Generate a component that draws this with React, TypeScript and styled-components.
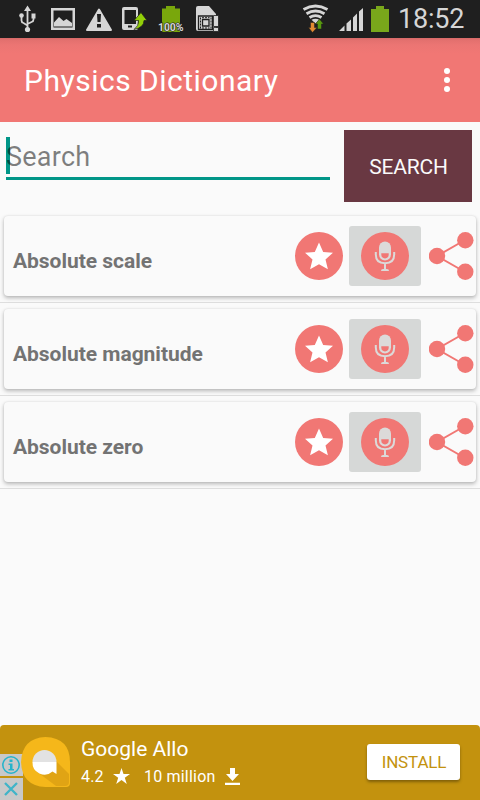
import React from "react";
import styled, { createGlobalStyle } from "styled-components";

const coral = "#f17774";

const GlobalStyle = createGlobalStyle`
  * { box-sizing: border-box; }
  body { margin: 0; background: #fafafa; font-family: Roboto, sans-serif; }
  svg { display: block; flex: none; }
`;

const Screen = styled.div`
  width: 480px;
  height: 800px;
  display: flex;
  flex-direction: column;
  overflow: hidden;
  background: #fafafa;
`;

const StatusBar = styled.header`
  height: 38px;
  flex: none;
  display: flex;
  justify-content: space-between;
  background: #1f1f1f;
`;

const Clock = styled.span`
  margin-left: 8px;
  width: 82px;
  font-size: 27px;
  line-height: 38px;
  letter-spacing: -0.2px;
  color: #d6d6d6;
`;

const StatusRight = styled.div`
  display: flex;
`;

const Toolbar = styled.div`
  height: 84px;
  flex: none;
  display: flex;
  align-items: center;
  justify-content: space-between;
  padding: 0 29px 0 24px;
  background: linear-gradient(#d56a68 0, #e3706e 2px, #ec7573 7px, ${coral} 16px);
`;

const Title = styled.h1`
  margin: 1px 0 0;
  font-size: 30px;
  line-height: 36px;
  font-weight: 400;
  letter-spacing: 0.5px;
  color: #fff;
`;

const MenuDots = styled.button`
  width: 8px;
  padding: 0;
  border: 0;
  background: none;
  display: flex;
  flex-direction: column;
  align-items: center;
  gap: 3px;
`;

const Dot = styled.i`
  width: 6px;
  height: 6px;
  border-radius: 50%;
  background: #fff;
`;

const SearchRow = styled.div`
  height: 88px;
  flex: none;
  display: flex;
  justify-content: space-between;
  padding: 8px 8px 8px 6px;
`;

const Field = styled.div`
  width: 324px;
  height: 50px;
  display: flex;
  align-items: flex-start;
  padding-top: 7px;
  border-bottom: 3px solid #009688;
`;

const Caret = styled.i`
  width: 4px;
  height: 37px;
  background: #009688;
`;

const Placeholder = styled.span`
  margin-left: -4px;
  font-size: 27px;
  line-height: 40px;
  letter-spacing: 0.25px;
  color: rgba(0, 0, 0, 0.5);
`;

const SearchButton = styled.button`
  width: 128px;
  height: 72px;
  padding: 2px 0 0 1px;
  border: 0;
  background: #693842;
  color: #fafafa;
  font: 400 21px/24px Roboto, sans-serif;
  letter-spacing: -0.2px;
`;

const List = styled.main`
  flex: 1;
`;

const Row = styled.div`
  height: 93px;
  padding: 6px 4px;
  border-bottom: 1px solid #dedede;
`;

const Card = styled.article`
  height: 80px;
  display: flex;
  align-items: center;
  padding: 0 2px 0 9px;
  border-radius: 4px;
  background: #fafafa;
  box-shadow: 0 2px 4px rgba(0, 0, 0, 0.27), 0 0 2px rgba(0, 0, 0, 0.1);
`;

const Term = styled.span`
  flex: 1;
  margin-top: 10px;
  font-size: 21px;
  line-height: 26px;
  font-weight: 700;
  letter-spacing: -0.03px;
  color: #737373;
`;

const MicBox = styled.div`
  width: 72px;
  height: 60px;
  margin: 0 8px 0 6px;
  display: flex;
  align-items: center;
  justify-content: center;
  border-radius: 3px;
  background: #d6d8d7;
`;

const Banner = styled.footer`
  height: 75px;
  flex: none;
  display: flex;
  border-radius: 4px 4px 0 0;
  background: #c3920e;
  color: #fff;
`;

const AdChoices = styled.div`
  width: 23px;
  padding-top: 29px;
  display: flex;
  flex-direction: column;
  gap: 2px;
`;

const AdButton = styled.div`
  width: 23px;
  height: 22px;
  background: #c8c8c8;
`;

const AppLogo = styled.div`
  width: 49px;
  margin: 12px 11px 0 -2px;
`;

const AdInfo = styled.div`
  flex: 1;
  padding-top: 11px;
`;

const AdName = styled.div`
  font-size: 21px;
  line-height: 26px;
`;

const AdStats = styled.div`
  display: flex;
  align-items: center;
  height: 28px;
  font-size: 16px;
  letter-spacing: 0.2px;
`;

const Stat = styled.span<{ $width: number }>`
  width: ${(p) => p.$width}px;
  white-space: nowrap;
`;

const Install = styled.button`
  width: 93px;
  height: 36px;
  margin: 19px 20px 0 0;
  padding: 0 0 0 1px;
  border: 0;
  border-radius: 3px;
  background: #fff;
  color: #c3920e;
  font: 400 17px/34px Roboto, sans-serif;
  letter-spacing: -0.15px;
  box-shadow: 0 2px 3px rgba(0, 0, 0, 0.35);
`;

const NotificationIcons = () => (
  <svg width="230" height="38" viewBox="0 0 230 38" fill="#d6d6d6">
    <g stroke="#d6d6d6" strokeWidth="1.800" fill="none">
      <path d="M27.500 9v20M21.500 17v3.500q0 2 2 2.500l4 2.500M33.500 16v3.500q0 2-2 2.500l-4 2" />
    </g>
    <path d="M27.500 5.500 31 11h-7zM31.500 13.500h4v5h-4z" />
    <circle cx="21.500" cy="15.500" r="2.300" />
    <circle cx="27.500" cy="29.500" r="2.600" />
    <path fillRule="evenodd" d="M51 8h24v22H51zm2.500 2.500v17h19v-17z" />
    <path d="M54 26.500v-4l5-5.500 4.500 4 3-2 5.500 4v3.500z" />
    <path d="M99 9.500 111 30H87z" stroke="#d6d6d6" strokeWidth="2" strokeLinejoin="round" />
    <path d="M97 14h4l-.5 8h-3zM97 24h4v3.500h-4z" fill="#1f1f1f" />
    <path fillRule="evenodd" d="M124 7h12q2 0 2 2v19q0 2-2 2h-12q-2 0-2-2V9q0-2 2-2zm.5 3v14H136V10zm3.500 15.500v2h4v-2z" />
    <path d="M134 29.500q5-3.500 4.500-9H134l7-8 6 8h-3q0 7-10 9z" fill="#92cf08" stroke="#1f1f1f" strokeWidth=".7" />
    <path d="M162 8.500h4V6h9v2.500h5V32h-18z" fill="#79a70c" />
    <text x="158" y="31" fontSize="10.500" fontWeight="700" textLength="25.500" stroke="#1f1f1f" strokeWidth="1.200" paintOrder="stroke" fontFamily="Roboto, sans-serif">100%</text>
    <path d="M198 6h11l7 8v3h-2v10h2v4h-18q-2 0-2-2V8q0-2 2-2z" />
    <path d="M198.500 16h14v13.500h-14z" fill="#d6d6d6" stroke="#1f1f1f" strokeWidth="1.300" />
    <path d="M202.500 19.500h6.500v6.500h-6.500z" fill="#d6d6d6" stroke="#1f1f1f" strokeWidth="1.300" />
    <path d="M202 17.700h7.500M202 28h7.500M200.500 17.500v11M211 17.500v11" stroke="#1f1f1f" strokeWidth="1" strokeDasharray="2 1" />
    <path d="M213.500 15.500h5v11h-5zM213.500 27.500h5v4h-5z" stroke="#1f1f1f" strokeWidth=".8" />
  </svg>
);

const SystemIcons = () => (
  <svg width="90" height="38" viewBox="300 0 90 38" fill="#d6d6d6">
    <g fill="none" stroke="#d6d6d6" strokeWidth="2.800">
      <path d="M303.500 9.500q12-7 24 0M306.500 13.700q9-5.400 18 0M309.500 17.500q6-3.600 12 0" />
    </g>
    <path d="M311.500 19.800q4-2 8 0l-4 3.700z" />
    <path d="M310.500 22.500h4v5h2.500l-4.500 5-4-5h2z" fill="#e28b32" stroke="#1f1f1f" strokeWidth=".5" />
    <path d="M317.500 29h4v-5h2l-4-5-4 5h2z" fill="#58990f" stroke="#1f1f1f" strokeWidth=".5" />
    <path d="M339 31l5.500-5.500V31zM346.500 31v-7.500l4.500-4V31zM353 31V17.500l4-4V31zM359 31V11.500l4-3.500v23z" />
    <path d="M371 9h5V6h8v3h5v23h-18z" fill="#79a71b" />
  </svg>
);

const StarBadge = () => (
  <svg width="48" height="48" viewBox="0 0 48 48">
    <circle cx="24" cy="24" r="24" fill={coral} />
    <path d="M24 10.500 28.200 20l9.800.7-7.500 6.700 2.400 9.900L24 32.200l-8.900 5.100 2.400-9.900L10 20.700l9.800-.7z" fill="#fff" />
  </svg>
);

const MicBadge = () => (
  <svg width="48" height="48" viewBox="0 0 48 48">
    <circle cx="24" cy="24" r="24" fill={coral} />
    <rect x="18" y="9.500" width="12" height="19" rx="6" fill="#dcdad9" />
    <path d="M20.300 21.200h7.400v1.400q0 3.800-3.700 3.800t-3.700-3.800z" fill={coral} />
    <path d="M14.800 20v2.500q0 8.700 9.200 8.700t9.200-8.700V20M24 31v7" fill="none" stroke="#dcdad9" strokeWidth="2" />
    <path d="M20 39q0-2 2-2h4q2 0 2 2z" fill="#dcdad9" />
  </svg>
);

const ShareIcon = () => (
  <svg width="45" height="48" viewBox="0 0 45 48" fill={coral}>
    <path d="M36 8 8 24l28 16" fill="none" stroke={coral} strokeWidth="2" />
    <circle cx="8" cy="24" r="8.200" />
    <circle cx="36.300" cy="8.200" r="8.200" />
    <circle cx="36.300" cy="39.800" r="8.200" />
  </svg>
);

const AlloLogo = () => (
  <svg width="49" height="50" viewBox="0 0 49 50">
    <path d="M24.500 0Q49 1 49 25v21q0 4-4 4H24.500Q1 49 0 25 1 1 24.500 0z" fill="#f5b71a" />
    <path d="m35 24 13 13v8q0 4-4 4h-9L15 34z" fill="#e0a414" />
    <path d="M11.500 25a12 12 0 0 1 24 0z" fill="#e2e2e2" />
    <path d="M11.500 25h24v12l-4-2.500A12 12 0 0 1 11.500 25z" fill="#fff" />
  </svg>
);

const terms = ["Absolute scale", "Absolute magnitude", "Absolute zero"];

export default function App() {
  return (
    <>
      <GlobalStyle />
      <Screen>
        <StatusBar>
          <NotificationIcons />
          <StatusRight>
            <SystemIcons />
            <Clock>18:52</Clock>
          </StatusRight>
        </StatusBar>
        <Toolbar>
          <Title>Physics Dictionary</Title>
          <MenuDots aria-label="More options">
            <Dot />
            <Dot />
            <Dot />
          </MenuDots>
        </Toolbar>
        <SearchRow>
          <Field>
            <Caret />
            <Placeholder>Search</Placeholder>
          </Field>
          <SearchButton>SEARCH</SearchButton>
        </SearchRow>
        <List>
          {terms.map((term) => (
            <Row key={term}>
              <Card>
                <Term>{term}</Term>
                <StarBadge />
                <MicBox>
                  <MicBadge />
                </MicBox>
                <ShareIcon />
              </Card>
            </Row>
          ))}
        </List>
        <Banner>
          <AdChoices>
            <AdButton>
              <svg width="23" height="22" viewBox="0 0 23 22">
                <circle cx="11" cy="11" r="8.200" fill="none" stroke="#27b3cb" strokeWidth="1.600" />
                <path d="M9.500 5.500h3v2.500h-3zM8.500 9.500h4V15H14v1.500H8.500V15H10v-4H8.500z" fill="#27b3cb" />
              </svg>
            </AdButton>
            <AdButton>
              <svg width="23" height="22" viewBox="0 0 23 22">
                <path d="m5 5 12 12M17 5 5 17" stroke="#3fb4c8" strokeWidth="2.300" />
              </svg>
            </AdButton>
          </AdChoices>
          <AppLogo>
            <AlloLogo />
          </AppLogo>
          <AdInfo>
            <AdName>Google Allo</AdName>
            <AdStats>
              <Stat $width={32}>4.2</Stat>
              <svg width="17" height="16" viewBox="0 0 17 16">
                <path d="m8.500 0 2 5.900H17l-5.200 3.800 2 6.300-5.300-3.900L3.200 16l2-6.300L0 5.900h6.500z" fill="#fff" />
              </svg>
              <Stat $width={14} />
              <Stat $width={81}>10 million</Stat>
              <svg width="15" height="17" viewBox="0 0 15 17">
                <path d="M5 0h5v6h4l-6.500 7L1 6h4zM0 14.800h15V17H0z" fill="#fff" />
              </svg>
            </AdStats>
          </AdInfo>
          <Install>INSTALL</Install>
        </Banner>
      </Screen>
    </>
  );
}
